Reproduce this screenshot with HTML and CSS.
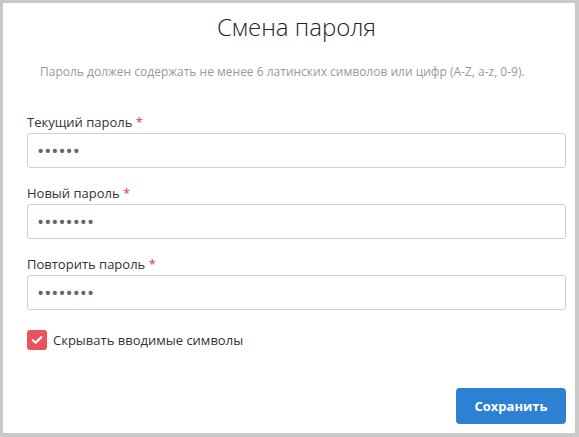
FILE: index.html
```html
<!DOCTYPE html>
<html lang="ru">
<head>
<meta charset="utf-8">
<link rel="stylesheet" href="styles.css">
</head>
<body>
<div class="dialog">
  <h1 class="title">Смена пароля</h1>
  <p class="hint">Пароль должен содержать не менее 6 латинских символов или цифр (A-Z, a-z, 0-9).</p>
  <div class="field">
    <label class="label">Текущий пароль <span class="req">*</span></label>
    <input class="input" type="password" value="123456">
  </div>
  <div class="field">
    <label class="label">Новый пароль <span class="req">*</span></label>
    <input class="input" type="password" value="12345678">
  </div>
  <div class="field">
    <label class="label">Повторить пароль <span class="req">*</span></label>
    <input class="input" type="password" value="12345678">
  </div>
  <label class="check">
    <span class="box"><svg width="12" height="10" viewBox="0 0 12 10"><path d="M1.8 5.2 L4.6 7.8 L10.2 2.2" fill="none" stroke="#fff" stroke-width="2.2" stroke-linecap="round" stroke-linejoin="round"/></svg></span>
    <span class="check-text">Скрывать вводимые символы</span>
  </label>
  <div class="actions">
    <button class="btn">Сохранить</button>
  </div>
</div>
</body>
</html>
```
FILE: styles.css
```css
* { box-sizing: border-box; }
html, body { margin: 0; padding: 0; background: #fff; }
body { font-family: "Open Sans", "Liberation Sans", sans-serif; color: #333; }
.dialog {
  width: 579px;
  height: 437px;
  border-style: solid;
  border-color: #c9c9c9;
  border-width: 3px 4px 4px 3px;
  padding: 8px 9px 0 24px;
  display: flex;
  flex-direction: column;
}
.title {
  margin: 0;
  font-size: 24px;
  font-weight: 300;
  line-height: 32px;
  color: #222;
  text-align: center;
}
.hint {
  margin: 20px 0 0 0;
  padding-left: 13px;
  font-size: 12px;
  line-height: 18px;
  color: #999;
}
.field { display: flex; flex-direction: column; }
.field:first-of-type { margin-top: 32px; }
.field + .field { margin-top: 16px; }
.label {
  font-size: 13px;
  line-height: 18px;
  color: #333;
  margin-bottom: 2px;
}
.req { color: #e53935; }
.input {
  height: 35px;
  border: 1px solid #cfcfcf;
  border-radius: 3px;
  padding: 0 9px;
  font-family: "Open Sans", sans-serif;
  font-size: 19px;
  letter-spacing: 0;
  color: #666;
  outline: none;
}
.check {
  margin-top: 20px;
  display: flex;
  align-items: center;
  gap: 6px;
}
.box {
  width: 20px;
  height: 20px;
  border-radius: 3px;
  background: #e9535d;
  display: flex;
  align-items: center;
  justify-content: center;
}
.check-text { font-size: 13px; color: #333; line-height: 20px; }
.actions {
  margin-top: 38px;
  display: flex;
  justify-content: flex-end;
}
.btn {
  width: 110px;
  height: 36px;
  border: none;
  border-radius: 4px;
  background: #2e80d3;
  color: #fff;
  font-family: "Open Sans", sans-serif;
  font-weight: 700;
  font-size: 13px;
}
```
